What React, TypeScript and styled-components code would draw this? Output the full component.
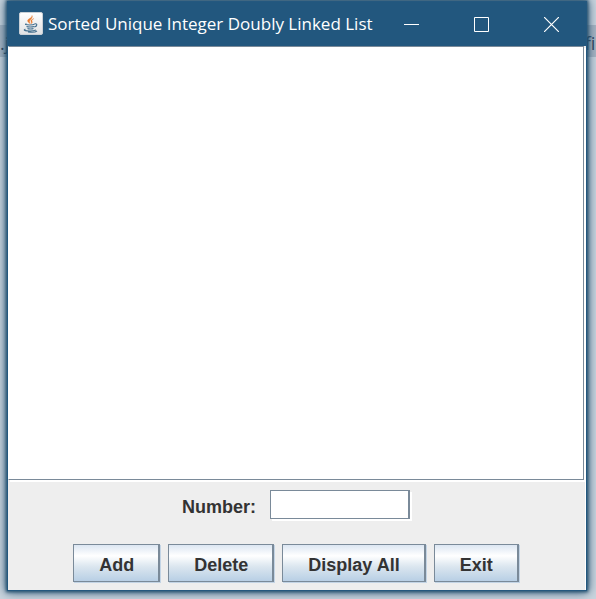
import React, { useState } from "react";
import styled, { createGlobalStyle } from "styled-components";

const GlobalStyle = createGlobalStyle`
  *, *::before, *::after { box-sizing: border-box; }
  body { margin: 0; }
`;

const Desktop = styled.div`
  position: relative;
  min-height: 100vh;
  display: flex;
  padding: 2px 10px 9px 8px;
  overflow: hidden;
  background: linear-gradient(#cbd5de 25px, #a9b6c3 25px, #a9b6c3 57px, #cbd5de 57px);
`;

const BackdropText = styled.span<{ $side: "left" | "right" }>`
  position: absolute;
  top: 31px;
  ${(p) => (p.$side === "left" ? "left: 0" : "right: -4px")};
  color: #2f455c;
  font: 18px/24px "Open Sans", sans-serif;
`;

const Window = styled.main`
  position: relative;
  flex: 1;
  min-width: 0;
  display: flex;
  flex-direction: column;
  background: #eeeeee;
  box-shadow: 0 0 0 1px #24587f, 0 0 3px 2px #24506f, 0 0 10px 2px #24506f;
`;

const TitleBar = styled.header`
  height: 44px;
  display: flex;
  align-items: center;
  padding-left: 11px;
  background: #22577e;
  color: #ffffff;
`;

const Title = styled.h1`
  flex: 1;
  min-width: 0;
  margin: 0 0 0 5px;
  font: 400 17px/24px "Open Sans", sans-serif;
  white-space: nowrap;
`;

const Caption = styled.button`
  flex: none;
  width: 70px;
  height: 44px;
  display: grid;
  place-items: center;
  padding: 0;
  border: 0;
  background: transparent;
  color: #ffffff;
`;

const Output = styled.textarea`
  display: block;
  flex: 1;
  min-height: 200px;
  margin-right: 2px;
  padding: 4px;
  border: 1px solid #7a8a99;
  border-left-color: #ffffff;
  box-shadow: 2px 2px 0 #ffffff;
  background: #ffffff;
  color: #333333;
  font: 18px/22px "Liberation Sans", Arial, sans-serif;
  resize: none;
  outline: none;
`;

const Controls = styled.form`
  display: flex;
  flex-direction: column;
  gap: 25px;
  padding: 10px 1px 8px 0;
  border-right: 1px solid #ffffff;
`;

const Row = styled.div<{ $gap: number }>`
  display: flex;
  align-items: center;
  justify-content: center;
  gap: ${(p) => p.$gap}px;
`;

const Label = styled.label`
  padding-top: 4px;
  color: #333333;
  font: 700 18px/22px "Liberation Sans", Arial, sans-serif;
`;

const NumberInput = styled.input`
  width: 140px;
  height: 29px;
  padding: 2px 4px;
  border: 1px solid #7a8a99;
  border-right-width: 2px;
  border-radius: 0;
  box-shadow: 2px 2px 0 #ffffff;
  background: #ffffff;
  color: #333333;
  font: 18px/22px "Liberation Sans", Arial, sans-serif;
  outline: none;
`;

const ActionButton = styled.button`
  height: 38px;
  padding: 4px 24px 0 25px;
  border: 1px solid #7a8a99;
  border-right-width: 2px;
  border-radius: 0;
  box-shadow: 1px 1px 0 #c3d4e5;
  background: linear-gradient(#dce6f2, #ffffff 30%, #dbe6ef 60%, #b8cfe5);
  color: #333333;
  font: 700 18px/22px "Liberation Sans", Arial, sans-serif;
`;

const IconFrame = styled.svg`
  flex: none;
  width: 24px;
  height: 24px;
`;

const JavaIcon = () => (
  <IconFrame viewBox="0 0 24 24" fill="none" aria-hidden="true">
    <defs>
      <linearGradient id="tile" x2="0" y2="1">
        <stop stopColor="#ffffff" />
        <stop offset="1" stopColor="#dfe1e3" />
      </linearGradient>
    </defs>
    <rect x="0.5" y="0.5" width="23" height="22" rx="1.5" fill="url(#tile)" stroke="#c9d0d6" />
    <path d="M13 3.500c1 2.200-5 3.300-4.300 5.700.3 1 1.500 1.600 2.500 2.500-.4-1.300-1-2-.5-2.900.6-1.300 3.400-2.800 2.300-5.300z" fill="#e8792b" stroke="#e8792b" strokeWidth=".4" />
    <path d="M15 6.500c-2.600.9-3.800 1.900-2.900 3.200.5.700.4 1.300-.2 2 1.600-.7 1.800-1.600 1.100-2.500-.5-.8.300-1.600 2-2.700z" fill="#e8792b" stroke="#e8792b" strokeWidth=".3" />
    <path d="M7.500 11.800c-2 .5-1 1.200 3.300 1.200 2.200 0 4-.3 4.700-.7M7.500 14.500c1.500.7 5.900.7 7.500 0M8.500 16.500c1.200.6 4.700.6 6 0M15.500 11.800c3.200-.7 3 2.500-.2 3.100M6.500 17.300c-5 1.300 6 2.600 10.500.6M9 19.900c3.500.6 7.500.3 9-.9" stroke="#44708f" strokeWidth="1.100" />
  </IconFrame>
);

const actions = ["Add", "Delete", "Display All", "Exit"];

export default function App() {
  const [value, setValue] = useState("");
  return (
    <>
      <GlobalStyle />
      <Desktop>
        <BackdropText $side="left" aria-hidden="true">.j</BackdropText>
        <BackdropText $side="right" aria-hidden="true">fil</BackdropText>
        <Window>
          <TitleBar>
            <JavaIcon />
            <Title>Sorted Unique Integer Doubly Linked List</Title>
            <Caption aria-label="Minimize">
              <svg width="15" height="15"><path d="M0 7.500h15" stroke="currentColor" /></svg>
            </Caption>
            <Caption aria-label="Maximize">
              <svg width="15" height="15"><path d="M.5.5h14v14H.5z" fill="none" stroke="currentColor" /></svg>
            </Caption>
            <Caption aria-label="Close">
              <svg width="15" height="15"><path d="M0 0l15 15M15 0L0 15" stroke="currentColor" strokeWidth="1.200" /></svg>
            </Caption>
          </TitleBar>
          <Output aria-label="List contents" readOnly />
          <Controls onSubmit={(e) => e.preventDefault()}>
            <Row $gap={14}>
              <Label htmlFor="number">Number:</Label>
              <NumberInput id="number" value={value} onChange={(e) => setValue(e.target.value)} />
            </Row>
            <Row $gap={8}>
              {actions.map((name) => (
                <ActionButton key={name} type="button">{name}</ActionButton>
              ))}
            </Row>
          </Controls>
        </Window>
      </Desktop>
    </>
  );
}
